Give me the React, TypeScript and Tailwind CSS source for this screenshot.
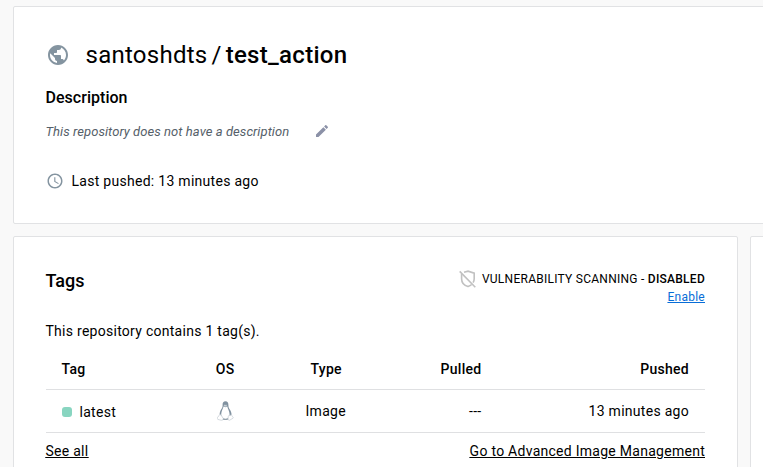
import type { ReactNode } from "react";

function GlobeIcon() {
  return (
    <svg className="size-6 shrink-0 fill-[#8494a0]" viewBox="0 0 24 24">
      <path d="M12 2C6.48 2 2 6.48 2 12s4.48 10 10 10 10-4.48 10-10S17.52 2 12 2zm-1 17.93c-3.95-.49-7-3.85-7-7.93 0-.62.08-1.21.21-1.79L9 15v1c0 1.1.9 2 2 2v1.93zm6.9-2.54c-.26-.81-1-1.39-1.9-1.39h-1v-3c0-.55-.45-1-1-1H8v-2h2c.55 0 1-.45 1-1V7h2c1.1 0 2-.9 2-2v-.41c2.93 1.19 5 4.06 5 7.41 0 2.08-.8 3.97-2.1 5.39z" />
    </svg>
  );
}

function PencilIcon() {
  return (
    <svg className="size-4 shrink-0 fill-[#8b91a7]" viewBox="0 0 24 24">
      <path d="M3 17.25V21h3.75L17.81 9.94l-3.75-3.75L3 17.25zM20.71 7.04c.39-.39.39-1.02 0-1.41l-2.34-2.34c-.39-.39-1.02-.39-1.41 0l-1.83 1.83 3.75 3.75 1.83-1.83z" />
    </svg>
  );
}

function ClockIcon() {
  return (
    <svg className="size-[18px] shrink-0 fill-[#8494a0]" viewBox="0 0 24 24">
      <path d="M11.99 2C6.47 2 2 6.48 2 12s4.47 10 9.99 10C17.52 22 22 17.52 22 12S17.52 2 11.99 2zM12 20c-4.42 0-8-3.58-8-8s3.58-8 8-8 8 3.58 8 8-3.58 8-8 8zm.5-13H11v6l5.25 3.15.75-1.23-4.5-2.67z" />
    </svg>
  );
}

function ShieldOffIcon() {
  return (
    <svg className="h-[18px] w-[17px] shrink-0" viewBox="0 0 17 18" fill="none" stroke="#c1c1c1" strokeWidth="1.6">
      <path d="M5 2.2 9 1.2l6.2 2v5.5c0 1.6-.4 2.8-1.1 4M2.600 4v4.700c0 4 2.600 6.800 6.400 7.900 1.500-.5 2.700-1.200 3.700-2.100" />
      <path d="m.7 1.4 15.6 15.800" />
    </svg>
  );
}

function LinuxIcon() {
  return (
    <svg className="h-5 w-[17px]" viewBox="0 0 17 20">
      <path d="M8.5.3C6.500.3 5.500 1.700 5.600 3.700c.1 2-.1 2.700-1.200 4.400C3.300 9.800 2.500 11.700 2.700 14l2.500 4.500h6.700l2.600-4.500c.2-2.300-.9-4.400-2-6-1-1.600-1.100-2.400-1.100-4.300 0-2-.9-3.400-2.900-3.400z" fill="#8192a0" />
      <path d="M8.400 6.200c-.8 0-1.400-.5-1.900-.6-.2 1.700-2.200 4.600-2.300 7.700-.1 2.500 1.500 4.600 4.300 4.600s4.200-2 4.100-4.600c-.1-3.100-1.900-5.600-2.300-7.700-.5.100-1.100.600-1.900.600z" fill="#fff" />
      <path d="M6.800 4.300c.4-.6 1-.6 1.500-.2.500-.4 1.200-.4 1.600.2l-.3 1-1.300.5-1.300-.5z" fill="#c5ced4" />
      <path d="M2.700 13.600 4 14l2.100 3.100c.4 1.100-.2 2.200-1.700 2.200L.8 18.400c-.6-.3-.2-1-.3-2 0-.8.700-.7 1.200-1.100.4-.4.400-1.500 1-1.700zM12 14.200c.5.600 1.400.5 2.100-.5.800.3.700 1.300 1.200 1.800.5.500 1.200.7 1.100 1.300-.2.700-2.400 1.300-3.200 2.100-.8.700-2 .4-2.100-.7-.1-1.200.1-3.600.9-4z" fill="#fff" stroke="#c4ccd2" strokeWidth=".7" />
      <path d="M6.300 18.300h4.200" stroke="#8c9ba6" strokeWidth="1" />
    </svg>
  );
}

function Card({ className, children }: { className: string; children?: ReactNode }) {
  return <section className={`rounded-[2px] border border-[#e1e2e4] bg-white ${className}`}>{children}</section>;
}

const columns = "grid grid-cols-[131px_65px_136px_120px_auto] items-center text-sm";

export default function App() {
  return (
    <main className="flex h-[467px] w-[763px] flex-col overflow-hidden bg-[#f9f9f9] pt-1.5 pl-[13px] font-[Roboto,sans-serif] whitespace-nowrap text-black">
      <Card className="-mr-1 h-[218px] shrink-0 pt-8 pl-[31.5px]">
        <header className="flex h-8 items-center">
          <GlobeIcon />
          <h1 className="ml-4 flex text-2xl leading-8 tracking-[0.26px]">
            <span>santoshdts</span>
            <span className="mx-1">/</span>
            <span className="font-medium tracking-[0.3px]">test_action</span>
          </h1>
        </header>
        <h2 className="mt-[15px] text-base leading-6 font-medium tracking-[0.03px]">Description</h2>
        <div className="mt-2.5 flex h-6 items-center">
          <p className="text-[13px] tracking-[0.06px] text-[#556069] italic">This repository does not have a description</p>
          <span className="mb-[3px] ml-[25px] flex"><PencilIcon /></span>
        </div>
        <div className="mt-[25px] flex h-6 items-center gap-2">
          <ClockIcon />
          <span className="text-sm tracking-[0.28px]">Last pushed: 13 minutes ago</span>
        </div>
      </Card>

      <div className="mt-3 flex h-[260px] shrink-0 gap-3">
        <Card className="w-[725px] shrink-0 pt-8 pr-8 pl-[31.5px]">
          <div className="flex h-10 justify-between">
            <h2 className="text-lg leading-6 font-medium">Tags</h2>
            <div className="mt-px flex flex-col items-end text-xs leading-[18px] tracking-[0.26px]">
              <div className="flex h-[18px] items-center gap-1.5">
                <ShieldOffIcon />
                <span>VULNERABILITY SCANNING - <span className="font-medium">DISABLED</span></span>
              </div>
              <a className="text-[#086dd7] underline">Enable</a>
            </div>
          </div>
          <p className="mt-3 text-sm leading-5 tracking-[0.27px]">This repository contains 1 tag(s).</p>
          <div className={`${columns} mt-2 h-[41px] border-b border-[#dfe0e2] font-medium tracking-[0.28px]`}>
            <span className="pl-4">Tag</span>
            <span className="pr-[7px] text-right">OS</span>
            <span className="pl-[69px]">Type</span>
            <span className="pr-4 text-right">Pulled</span>
            <span className="pr-4 text-right">Pushed</span>
          </div>
          <div className={`${columns} h-[43px] border-b border-[#dfe0e2] tracking-[0.28px]`}>
            <span className="mt-0.5 flex items-center gap-2 pl-4">
              <i className="-mt-px size-2.5 rounded-[3px] bg-[#88d5c0]" />latest
            </span>
            <span className="flex justify-end pr-2"><LinuxIcon /></span>
            <span className="pl-16">Image</span>
            <span className="pr-4 text-right">---</span>
            <span className="pr-4 text-right">13 minutes ago</span>
          </div>
          <footer className="mt-2 flex justify-between text-sm leading-5 tracking-[0.27px] underline">
            <a>See all</a>
            <a>Go to Advanced Image Management</a>
          </footer>
        </Card>
        <Card className="w-8 shrink-0" />
      </div>
    </main>
  );
}
